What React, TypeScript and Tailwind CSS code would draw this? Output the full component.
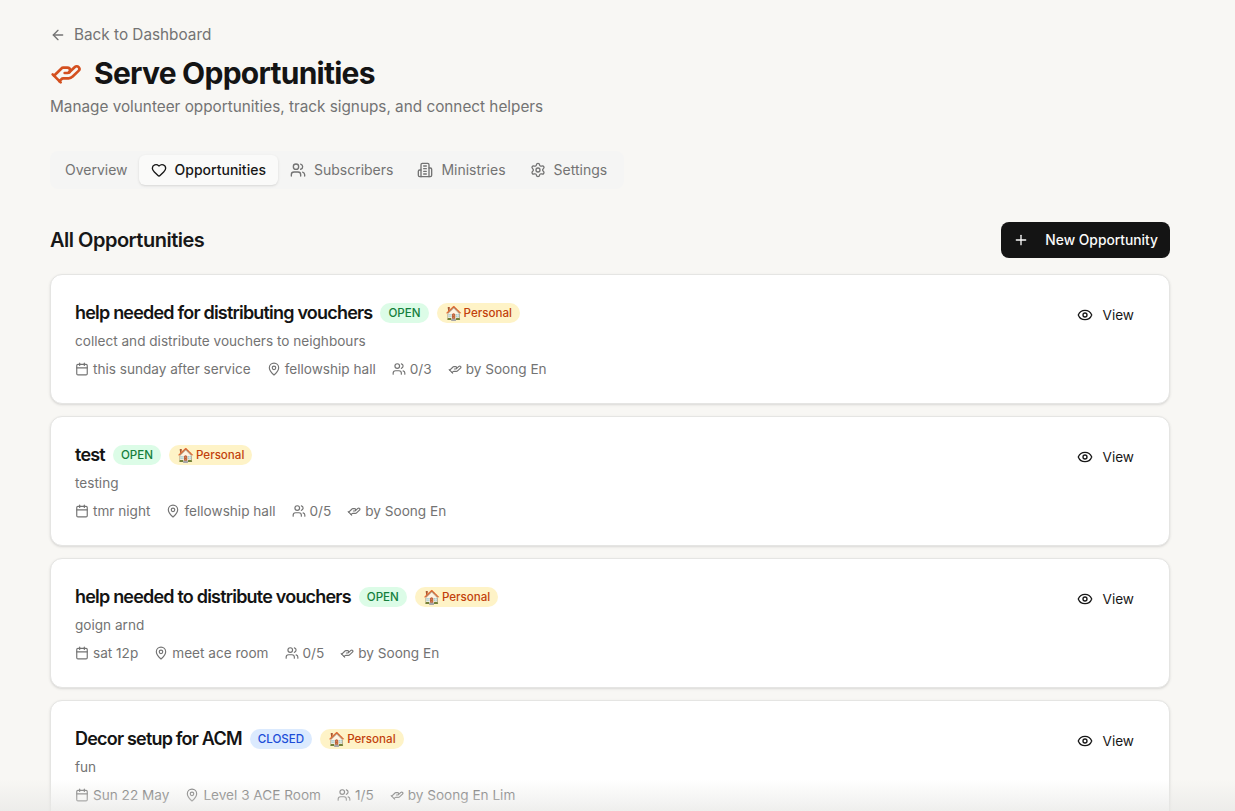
import { ArrowLeft, Calendar, Eye, HandHelping, Heart, MapPin, Plus, Settings, Users } from 'lucide-react';

const opportunities = [
  { title: 'help needed for distributing vouchers', status: 'OPEN', desc: 'collect and distribute vouchers to neighbours', when: 'this sunday after service', where: 'fellowship hall', count: '0/3', by: 'by Soong En' },
  { title: 'test', status: 'OPEN', desc: 'testing', when: 'tmr night', where: 'fellowship hall', count: '0/5', by: 'by Soong En' },
  { title: 'help needed to distribute vouchers', status: 'OPEN', desc: 'goign arnd', when: 'sat 12p', where: 'meet ace room', count: '0/5', by: 'by Soong En' },
  { title: 'Decor setup for ACM', status: 'CLOSED', desc: 'fun', when: 'Sun 22 May', where: 'Level 3 ACE Room', count: '1/5', by: 'by Soong En Lim' },
];

const BuildingIcon = () => (
  <svg viewBox="0 0 24 24" className="h-4 w-4" fill="none" stroke="currentColor" strokeWidth="2" strokeLinecap="round" strokeLinejoin="round">
    <path d="M6 22V4a2 2 0 0 1 2-2h8a2 2 0 0 1 2 2v18Z" />
    <path d="M6 12H4a2 2 0 0 0-2 2v6a2 2 0 0 0 2 2h2" />
    <path d="M18 9h2a2 2 0 0 1 2 2v9a2 2 0 0 1-2 2h-2" />
    <path d="M10 6h4" />
    <path d="M10 10h4" />
    <path d="M10 14h4" />
    <path d="M10 18h4" />
  </svg>
);

const OpportunityCard = ({ item }: { item: (typeof opportunities)[number] }) => (
  <div className="flex h-[130px] shrink-0 justify-between rounded-xl border border-[#e5e5e3] bg-white pl-6 pr-[35px] pt-[24px] shadow-sm">
    <div>
      <div className="flex items-center gap-2">
        <h3 className="text-[18px] leading-[28px] font-semibold tracking-[-0.8px] text-[#141414]">{item.title}</h3>
        <span
          className={
            item.status === 'OPEN'
              ? 'rounded-full bg-[#dcfce7] px-2 py-[2px] text-[11.6px] leading-4 font-medium text-[#15803d]'
              : 'rounded-full bg-[#dbeafe] px-2 py-[2px] text-[11.6px] leading-4 font-medium text-[#1d4ed8]'
          }
        >
          {item.status}
        </span>
        <span className="flex items-center gap-[3px] rounded-full bg-[#fef3c7] px-2 py-[2px] text-[11.6px] leading-4 font-medium text-[#c2410c]">
          <span className="w-4 text-center text-[14px] leading-4">🏠</span>
          Personal
        </span>
      </div>
      <p className="mt-1 text-[13.6px] leading-5 text-[#737373]">{item.desc}</p>
      <div className="mt-2 flex items-center gap-4 text-[13.6px] leading-5 text-[#737373]">
        <span className="flex items-center gap-1">
          <Calendar className="h-[14px] w-[14px]" />
          {item.when}
        </span>
        <span className="flex items-center gap-1">
          <MapPin className="h-[14px] w-[14px]" />
          {item.where}
        </span>
        <span className="flex items-center gap-1">
          <Users className="h-[14px] w-[14px]" />
          {item.count}
        </span>
        <span className="flex items-center gap-1">
          <HandHelping className="h-[14px] w-[14px]" />
          {item.by}
        </span>
      </div>
    </div>
    <button className="flex h-[32px] items-center gap-[10px] text-[13.6px] font-normal text-[#171717]">
      <Eye className="h-4 w-4" />
      View
    </button>
  </div>
);

const App = () => {
  return (
    <div className="relative h-[811px] overflow-hidden bg-[#f8f7f4] pl-[50px] pr-[65px] pt-[25px] font-['Inter',sans-serif] text-[#171717]">
      <a className="flex h-5 items-center gap-2 leading-5 text-[#737373]">
        <ArrowLeft className="h-4 w-4" />
        <span className="text-[15.3px]">Back to Dashboard</span>
      </a>

      <div className="mt-[8px] flex items-center gap-3">
        <HandHelping className="h-8 w-8 text-[#d4501f]" />
        <h1 className="text-3xl leading-[40px] font-bold tracking-tight text-[#141414]">Serve Opportunities</h1>
      </div>
      <p className="mt-[2px] text-[15.3px] leading-6 text-[#737373]">Manage volunteer opportunities, track signups, and connect helpers</p>

      <div className="mt-[32px] flex h-[38px] w-fit items-center rounded-lg bg-[#f5f5f4] py-1 pl-1 pr-[5px] text-sm text-[#737373]">
        <div className="px-[11px]">Overview</div>
        <div className="flex h-[30px] items-center gap-2 rounded-md bg-[#fafaf9] px-3 font-[450] text-[#171717] shadow-sm">
          <Heart className="h-4 w-4" />
          Opportunities
        </div>
        <div className="flex items-center gap-2 px-3">
          <Users className="h-4 w-4" />
          Subscribers
        </div>
        <div className="flex items-center gap-2 px-3">
          <BuildingIcon />
          Ministries
        </div>
        <div className="flex items-center gap-2 px-3">
          <Settings className="h-4 w-4" />
          Settings
        </div>
      </div>

      <div className="mt-[33px] flex h-9 items-center justify-between">
        <h2 className="text-[20px] leading-7 font-semibold tracking-[-0.5px] text-[#171717]">All Opportunities</h2>
        <button className="flex h-9 items-center gap-4 rounded-lg bg-[#141414] px-3 text-[13.8px] font-[450] text-[#fafafa]">
          <Plus className="h-4 w-4" />
          New Opportunity
        </button>
      </div>

      <div className="mt-4 flex flex-col gap-3">
        {opportunities.map((item) => (
          <OpportunityCard key={item.title} item={item} />
        ))}
      </div>

      <div className="absolute inset-x-0 bottom-0 h-8 bg-gradient-to-t from-[#e8e8e6]/70 to-transparent" />
    </div>
  );
};

export default App;
